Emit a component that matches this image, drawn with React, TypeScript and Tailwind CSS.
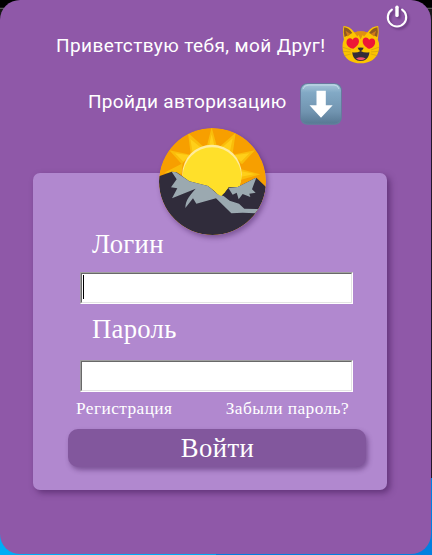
import React from 'react';

const SERIF = "font-['Liberation_Serif',serif]";

function PowerIcon() {
  return (
    <svg className="block size-full drop-shadow-[2px_2px_1px_rgba(40,10,60,0.4)]" viewBox="0 0 24 24" fill="none" stroke="#fff">
      <path d="M6.9 5.6A9.2 9.2 0 1 0 17.1 5.6" strokeWidth="2.1" strokeLinecap="round" />
      <path d="M12 3.2V11.4" strokeWidth="3.4" strokeLinecap="round" />
    </svg>
  );
}

function CatIcon() {
  return (
    <svg className="block h-[39px] w-[38px]" viewBox="188 77 112 116">
      <path d="M192 80Q210 80 224 99Q244 94 263 99Q277 80 295 80Q298 99 294 120Q300 133 297 151C292 178 268 191 243 191C217 191 193 178 190 151Q187 134 193 120Q189 99 192 80Z" fill="#fcc400" />
      <path d="M194 84Q207 85 218 101L195 113Q191 99 194 84ZM293 84Q280 85 268 101L292 113Q296 99 293 84Z" fill="#8f5a20" />
      <path d="M198 94L204 111L213 104ZM289 94L283 111L273 104Z" fill="#d07a18" />
      <path d="M224 99Q243 92 263 99L253 111L249 107L243 120L237 107L233 111Z" fill="#df9010" />
      <path d="M221 148C212 147 199 139 201 127C202 116 213 113 219 121C225 110 238 114 238 125C238 136 227 143 221 148ZM267 148C258 143 248 135 249 124C250 113 263 111 268 121C276 113 287 117 286 128C286 140 275 147 267 148Z" fill="#ee1736" />
      <path d="M234 145Q243 143 252 145Q250 152 243 155Q236 152 234 145Z" fill="#332b39" />
      <path d="M218 158Q231 161 243 154Q255 161 269 158C268 175 257 184 243 184C229 184 219 175 218 158Z" fill="#332b39" />
      <path d="M229 177Q243 169 258 177Q244 187 229 177Z" fill="#ef5270" />
      <path d="M189 143L214 151M188 155L213 157M192 169L214 163M298 143L274 151M299 155L274 157M295 169L273 163" stroke="#c09418" strokeWidth="1.5" />
    </svg>
  );
}

function ArrowIcon() {
  return (
    <svg className="block size-[42px]" viewBox="0 0 42 42">
      <defs>
        <linearGradient id="tile" x1="0" y1="0" x2="0" y2="1">
          <stop offset="0" stopColor="#a8c6da" />
          <stop offset=".22" stopColor="#82a9c5" />
          <stop offset=".7" stopColor="#7194b0" />
          <stop offset="1" stopColor="#587994" />
        </linearGradient>
      </defs>
      <rect x=".2" y=".2" width="41.6" height="41.6" rx="7" fill="#5f829b" />
      <rect x="1" y="1" width="40" height="39.5" rx="6.5" fill="url(#tile)" />
      <path d="M3 6Q4 2 9 2H34Q38 2 39 6" fill="none" stroke="#c3dbe7" strokeWidth="1" />
      <path d="M16.5 7.8H25.8V22.2H32.7L21 34.7L9.5 22.2H16.5Z" fill="#fff" />
    </svg>
  );
}

function SunriseLogo() {
  return (
    <svg className="block size-[107px] rounded-full shadow-[2px_3px_5px_rgba(50,15,75,0.4)]" viewBox="27 24 321 321">
      <defs>
        <clipPath id="disc"><circle cx="187.5" cy="184.5" r="160.5" /></clipPath>
      </defs>
      <g clipPath="url(#disc)">
        <rect x="27" y="24" width="321" height="321" fill="#f79f00" />
        <path d="M170 80L185 22L201 80ZM122 101L114 38L162 82ZM95 132L58 91L125 105ZM95 161L43 158L98 130ZM209 80L257 38L248 101ZM245 105L315 91L276 133ZM274 148L331 163L272 180Z" fill="#fabd0a" />
        <path d="M176 80L185 43L194 80ZM128 99L121 57L154 84ZM100 125L75 100L119 106ZM217 82L248 55L239 98ZM252 106L298 100L273 125ZM274 154L315 162L274 170Z" fill="#ffcf19" />
        <circle cx="186" cy="163" r="89" fill="#ffec9c" />
        <circle cx="186" cy="170" r="88" fill="#ffe02a" />
        <path d="M20 171L65 155L80 157L118 184L174 198L212 228L236 202L263 201L319 173L355 208V350H20Z" fill="#302c3b" />
        <path d="M65 155L78 157L118 184L174 198L203 223L221 228L239 242L267 251L283 266L325 267L316 280L278 278L244 280L198 235L139 251L129 235L106 264C106 240 121 225 137 206L66 235L82 205L63 202L80 178Z" fill="#9ba9b0" />
        <path d="M235 204L263 201L319 173L306 208L317 218L298 221L301 231L278 222L266 238L260 218L248 224Z" fill="#9ba9b0" />
        <path d="M183 202L203 223L214 228L225 217L234 204L200 196Z" fill="#ffe02a" />
      </g>
    </svg>
  );
}

function Field({ label, autoFocus = false }: { label: string; autoFocus?: boolean }) {
  return (
    <label className="block">
      <span className="ml-3 block h-[30px] text-[26.67px] leading-[30px] tracking-[0.3px]">{label}</span>
      <span className={`${autoFocus ? 'mt-[13px]' : 'mt-4'} block h-8 w-[273px] border border-t-[#a0a0a0] border-l-[#a0a0a0] border-r-white border-b-white`}>
        <span className="flex h-full items-start border border-t-[#696969] border-l-[#696969] border-r-[#e3e3e3] border-b-[#e3e3e3] bg-white pt-px pl-px">
          {autoFocus && <span className="h-6 w-px bg-black" />}
        </span>
      </span>
    </label>
  );
}

export default function App() {
  return (
    <div className="h-[555px] w-[432px] overflow-hidden bg-[linear-gradient(90deg,#00adf5_0_50%,#0080e0_50%)]">
      <div className="h-full bg-[linear-gradient(180deg,#000_0_7px,#171717_7px_8px,#555_8px_9px,#191919_9px_38px,#24152c_38px_478px,transparent_478px)]">
        <main className="relative flex h-[554px] w-[431px] flex-col rounded-[20px] bg-[#8f58a8] text-white">
          <button aria-label="Выход" className="absolute top-1 left-[385px] size-6"><PowerIcon /></button>
          <header className="h-[173px] shrink-0 pt-[25px] font-['Roboto','Noto_Sans',sans-serif] text-[19px] leading-[26px]">
            <div className="flex h-[39px] items-center pl-[56px]">
              <span className="w-[286px] pt-0.5 whitespace-nowrap tracking-[0.4px]">Приветствую тебя, мой Друг!</span>
              <CatIcon />
            </div>
            <div className="mt-[19px] flex h-[42px] items-center pl-[88px]">
              <span className="w-[212px] pb-1 whitespace-nowrap tracking-[0.3px]">Пройди авторизацию</span>
              <ArrowIcon />
            </div>
          </header>
          <section className={`relative ml-[33px] h-[317px] w-[354px] rounded-[7px] bg-[#b188cf] pt-[56px] shadow-[3px_3px_6px_rgba(55,15,75,0.5)] ${SERIF}`}>
            <div className="absolute -top-[45px] left-[126px]"><SunriseLogo /></div>
            <div className="flex flex-col gap-[10px] pl-[47px]">
              <Field label="Логин" autoFocus />
              <Field label="Пароль" />
            </div>
            <div className="mt-[7px] flex h-5 justify-between pr-[38px] pl-[43px] text-[17.33px] leading-5 tracking-[0.42px]">
              <a>Регистрация</a>
              <a>Забыли пароль?</a>
            </div>
            <button className="mt-[10px] ml-[35px] flex h-[38px] w-[298px] items-center justify-center rounded-[10px] bg-[#82579d] pl-px text-[26.67px] leading-[38px] tracking-[0.4px] shadow-[2px_3px_5px_rgba(60,20,85,0.45)]">Войти</button>
          </section>
        </main>
      </div>
    </div>
  );
}
